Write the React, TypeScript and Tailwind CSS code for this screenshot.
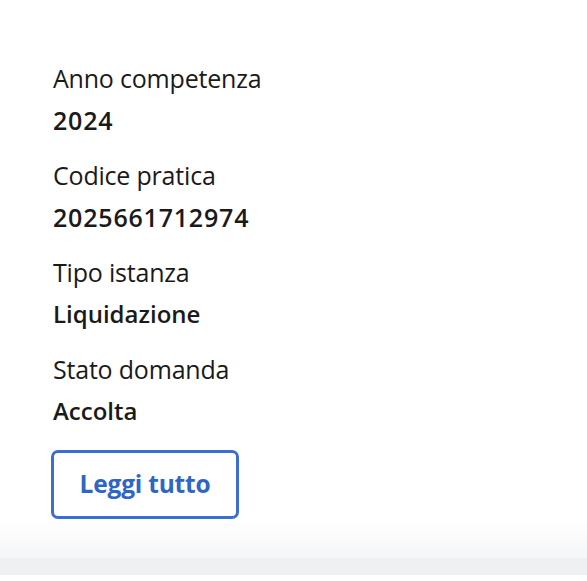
export default function App() {
  const items = [
    { label: "Anno competenza", value: "2024", numeric: true },
    { label: "Codice pratica", value: "2025661712974", numeric: true },
    { label: "Tipo istanza", value: "Liquidazione", numeric: false },
    { label: "Stato domanda", value: "Accolta", numeric: false },
  ];

  return (
    <div className="w-full min-h-[581px] bg-white font-['Open_Sans',sans-serif] text-[#1a1a1a]">
      <div className="pl-[53px] pt-[57px]">
        <div className="flex flex-col gap-[13px]">
          {items.map((it) => (
            <div key={it.label} className="flex flex-col">
              <span className="text-[25px] leading-[42px] tracking-[-0.2px]">
                {it.label}
              </span>
              <span
                className={
                  it.numeric
                    ? "text-[25px] leading-[42px] font-semibold tracking-[0.8px]"
                    : "text-[24px] leading-[42px] font-semibold"
                }
              >
                {it.value}
              </span>
            </div>
          ))}
        </div>
        <button className="mt-[18px] ml-[-2px] w-[188px] h-[69px] rounded-[7px] border-[3px] border-[#3a6fcf] text-[#2f66c6] text-[24.5px] font-bold tracking-[-0.2px]">
          Leggi tutto
        </button>
      </div>
      <div className="h-[39px] bg-gradient-to-b from-white to-[#f5f6f8]" />
      <div className="h-[17px] bg-[#eef0f2]" />
      <div className="h-[6px] bg-white" />
    </div>
  );
}
